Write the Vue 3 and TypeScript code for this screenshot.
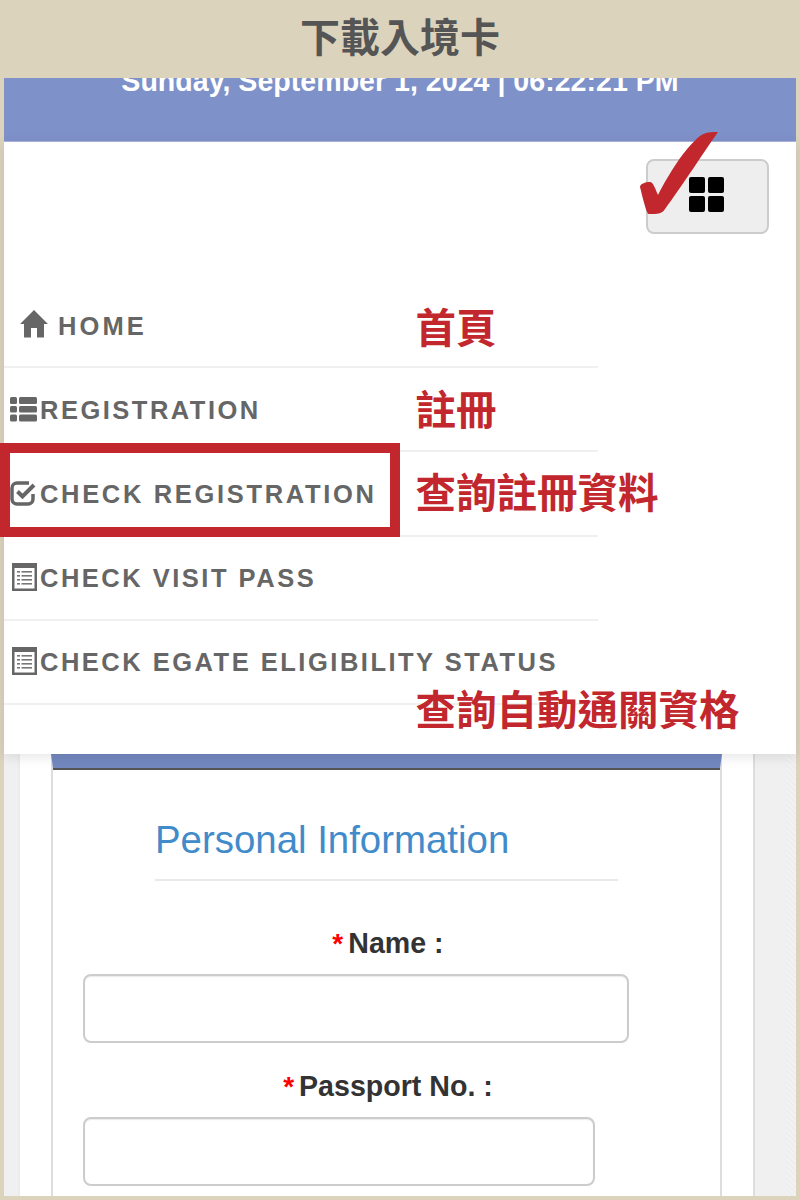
<template>
  <div class="frame">
    <header class="page-title">下載入境卡</header>

    <div class="shot">
      <div class="date-band">
        <div class="date-text">Sunday, September 1, 2024 | 06:22:21 PM</div>
      </div>

      <div class="menu-panel">
        <div class="toggle-row">
          <button class="toggle-btn" type="button" aria-label="menu">
            <span class="grid-icon"><i></i><i></i><i></i><i></i></span>
          </button>
        </div>

        <nav class="menu">
          <a v-for="item in menuItems" :key="item.label" class="menu-row" :class="item.icon">
            <svg v-if="item.icon === 'home'" class="icon icon-home" viewBox="0 0 28 28">
              <path d="M14 0 28 14H24V27.500H17V18H11V27.500H4V14H0Z" />
            </svg>
            <svg v-else-if="item.icon === 'th-list'" class="icon" viewBox="0 0 27 26">
              <rect x="0" y="1" width="7" height="7" rx="1.500" />
              <rect x="0" y="10" width="7" height="6.500" rx="1.500" />
              <rect x="0" y="18.500" width="7" height="7" rx="1.500" />
              <rect x="9" y="1" width="18" height="7" rx="1.500" />
              <rect x="9" y="10" width="18" height="6.500" rx="1.500" />
              <rect x="9" y="18.500" width="18" height="7" rx="1.500" />
            </svg>
            <svg v-else-if="item.icon === 'check'" class="icon" viewBox="0 0 27 26">
              <path class="check-box" d="M19 3H7A5 5 0 0 0 2 8V19A5 5 0 0 0 7 24H18A5 5 0 0 0 23 19V14" />
              <path class="check-tick" d="M7.500 11.500 12.500 16.500 24 5" />
            </svg>
            <svg v-else class="icon icon-list" viewBox="0 0 27 28">
              <path fill-rule="evenodd" d="M2 0H27V28H2ZM4.500 5V25.500H24.500V5Z" />
              <g class="list-lines">
                <rect x="7" y="8" width="3" height="1.600" />
                <rect x="11.500" y="8" width="10.500" height="1.600" />
                <rect x="7" y="12" width="3" height="1.600" />
                <rect x="11.500" y="12" width="10.500" height="1.600" />
                <rect x="7" y="16" width="3" height="1.600" />
                <rect x="11.500" y="16" width="10.500" height="1.600" />
                <rect x="7" y="20" width="3" height="1.600" />
                <rect x="11.500" y="20" width="10.500" height="1.600" />
              </g>
            </svg>
            <span class="menu-label">{{ item.label }}</span>
          </a>
        </nav>
      </div>

      <div class="form-area">
        <section class="form-column">
          <div class="form-card">
            <h2 class="section-title">Personal Information</h2>
            <div class="fields">
              <label class="field-label"><span class="req">*</span>Name :</label>
              <input class="field-input name-input" type="text" />
              <label class="field-label passport-label"><span class="req">*</span>Passport No. :</label>
              <input class="field-input passport-input" type="text" />
            </div>
          </div>
        </section>
      </div>
    </div>

    <!-- annotations laid over the screenshot -->
    <div class="highlight-box"></div>
    <div v-for="note in notes" :key="note.text" class="note" :class="note.cls">{{ note.text }}</div>
    <svg class="big-check" viewBox="0 0 86 90">
      <path d="M4 59C4 56 9 54 14 54 17 54 19 60 22 67 33 46 48 21 64 8 69 4 76 4 82 4 68 24 46 58 29 81 26 86 21 86 13 86 11 86 9 79 4 59Z" />
    </svg>
  </div>
</template>

<script setup lang="ts">
interface MenuItem {
  label: string
  icon: 'home' | 'th-list' | 'check' | 'list-alt'
}

const menuItems: MenuItem[] = [
  { label: 'HOME', icon: 'home' },
  { label: 'REGISTRATION', icon: 'th-list' },
  { label: 'CHECK REGISTRATION', icon: 'check' },
  { label: 'CHECK VISIT PASS', icon: 'list-alt' },
  { label: 'CHECK EGATE ELIGIBILITY STATUS', icon: 'list-alt' },
]

const notes = [
  { text: '首頁', cls: 'note-home' },
  { text: '註冊', cls: 'note-reg' },
  { text: '查詢註冊資料', cls: 'note-check' },
  { text: '查詢自動通關資格', cls: 'note-egate' },
]
</script>

<style>
html,
body {
  margin: 0;
  background: #dbd3bc;
}
</style>

<style scoped>
.frame {
  position: relative;
  width: 800px;
  height: 1200px;
  overflow: hidden;
  display: flex;
  flex-direction: column;
  background: #dbd3bc;
  font-family: "Liberation Sans", Arial, sans-serif;
}

.page-title {
  height: 78px;
  flex: none;
  box-sizing: border-box;
  padding-bottom: 9px;
  display: flex;
  align-items: center;
  justify-content: center;
  color: #555;
  font-family: "Noto Sans CJK TC", sans-serif;
  font-size: 40px;
  font-weight: 700;
}

.shot {
  flex: 1;
  min-height: 0;
  margin: 0 4px 4px;
  display: flex;
  flex-direction: column;
  background: #fff;
}

.date-band {
  height: 64px;
  flex: none;
  overflow: hidden;
  background: #7f91c9;
  border-bottom: 1px solid #a9b6dc;
  box-sizing: border-box;
  text-align: center;
}

.date-text {
  margin-top: -13px;
  line-height: 32px;
  color: #fff;
  font-size: 28.600px;
  font-weight: 700;
}

.menu-panel {
  position: relative;
  z-index: 1;
  height: 612px;
  flex: none;
  box-sizing: border-box;
  padding-top: 17px;
  background: #fff;
  box-shadow: 0 3px 12px rgba(0, 0, 0, 0.1);
}

.toggle-row {
  display: flex;
  justify-content: flex-end;
  padding-right: 27px;
}

.toggle-btn {
  width: 123px;
  height: 75px;
  padding: 0 2px 4px 0;
  display: flex;
  align-items: center;
  justify-content: center;
  box-sizing: border-box;
  background: #eee;
  border: 2px solid #ccc;
  border-radius: 8px;
}

.grid-icon {
  display: grid;
  grid-template-columns: 16px 16px;
  grid-auto-rows: 16px;
  gap: 3px;
}

.grid-icon i {
  background: #000;
  border-radius: 2px;
}

.menu {
  width: 594px;
  margin-top: 50px;
  display: flex;
  flex-direction: column;
}

.menu-row {
  height: 84.200px;
  box-sizing: border-box;
  padding-left: 6px;
  display: flex;
  align-items: center;
  gap: 3px;
  border-bottom: 2px solid #f0f0f0;
  color: #666;
}

.menu-row.home {
  padding-left: 16px;
  gap: 10px;
}

.icon {
  flex: none;
  width: 27px;
  height: 26px;
  fill: #666;
}

.icon-home {
  width: 28px;
  height: 28px;
  margin-top: -3px;
}

.icon-list {
  height: 28px;
  margin-top: -2px;
}

.list-lines {
  fill: #777;
}

.check-box {
  fill: none;
  stroke: #666;
  stroke-width: 3.500;
}

.check-tick {
  fill: none;
  stroke: #666;
  stroke-width: 4;
}

.menu-label {
  padding-top: 2px;
  font-size: 25.500px;
  font-weight: 700;
  letter-spacing: 2.500px;
  white-space: nowrap;
}

.home .menu-label {
  letter-spacing: 3.100px;
}

.check .menu-label {
  letter-spacing: 2.670px;
}

.form-area {
  flex: 1;
  min-height: 0;
  padding: 0 41px 0 14px;
  background: repeating-linear-gradient(45deg, #eeeeee 0 2px, #f2f2f2 2px 4px) right / 10px 100% no-repeat, #f0f0f0;
}

.form-column {
  height: 100%;
  box-sizing: border-box;
  padding: 0 31px;
  background: #fff;
  border-left: 2px solid #ececec;
  border-right: 2px solid #ddd;
}

.form-card {
  height: 100%;
  box-sizing: border-box;
  background: #fff;
  border-left: 2px solid #ddd;
  border-right: 2px solid #ddd;
  border-top: 14px solid #7388bf;
  box-shadow: inset 0 2px 0 #555;
}

.section-title {
  margin: 50px 0 0 102px;
  width: 463px;
  height: 63px;
  box-sizing: border-box;
  border-bottom: 2px solid #e8e8e8;
  color: #428bca;
  font-size: 38.400px;
  font-weight: 400;
  line-height: 44px;
}

.fields {
  padding: 47px 0 0 30px;
  display: flex;
  flex-direction: column;
  align-items: flex-start;
}

.field-label {
  width: 610px;
  height: 30px;
  margin-bottom: 16px;
  text-align: center;
  color: #333;
  font-size: 28.600px;
  font-weight: 700;
  line-height: 30px;
}

.passport-label {
  margin-top: 28px;
}

.req {
  margin-right: 5px;
  color: #f00;
  font-size: 28px;
  line-height: 0;
}

.field-input {
  height: 69px;
  box-sizing: border-box;
  padding: 0;
  background: #fff;
  border: 2px solid #ccc;
  border-radius: 8px;
  box-shadow: inset 0 1px 1px rgba(0, 0, 0, 0.08);
}

.name-input {
  width: 546px;
}

.passport-input {
  width: 512px;
}

.highlight-box {
  position: absolute;
  z-index: 2;
  left: 0;
  top: 443px;
  width: 400px;
  height: 94px;
  box-sizing: border-box;
  border: 10px solid #c1272d;
}

.note {
  position: absolute;
  z-index: 2;
  left: 415.500px;
  color: #c1272d;
  font-family: "Noto Sans CJK TC", sans-serif;
  font-size: 40.500px;
  font-weight: 700;
  line-height: 48px;
  white-space: nowrap;
}

.note-home {
  top: 302px;
}

.note-reg {
  top: 384px;
}

.note-check {
  top: 467px;
}

.note-egate {
  top: 684px;
}

.big-check {
  position: absolute;
  z-index: 2;
  left: 636px;
  top: 128px;
  width: 86px;
  height: 90px;
  fill: #c1272d;
}
</style>
